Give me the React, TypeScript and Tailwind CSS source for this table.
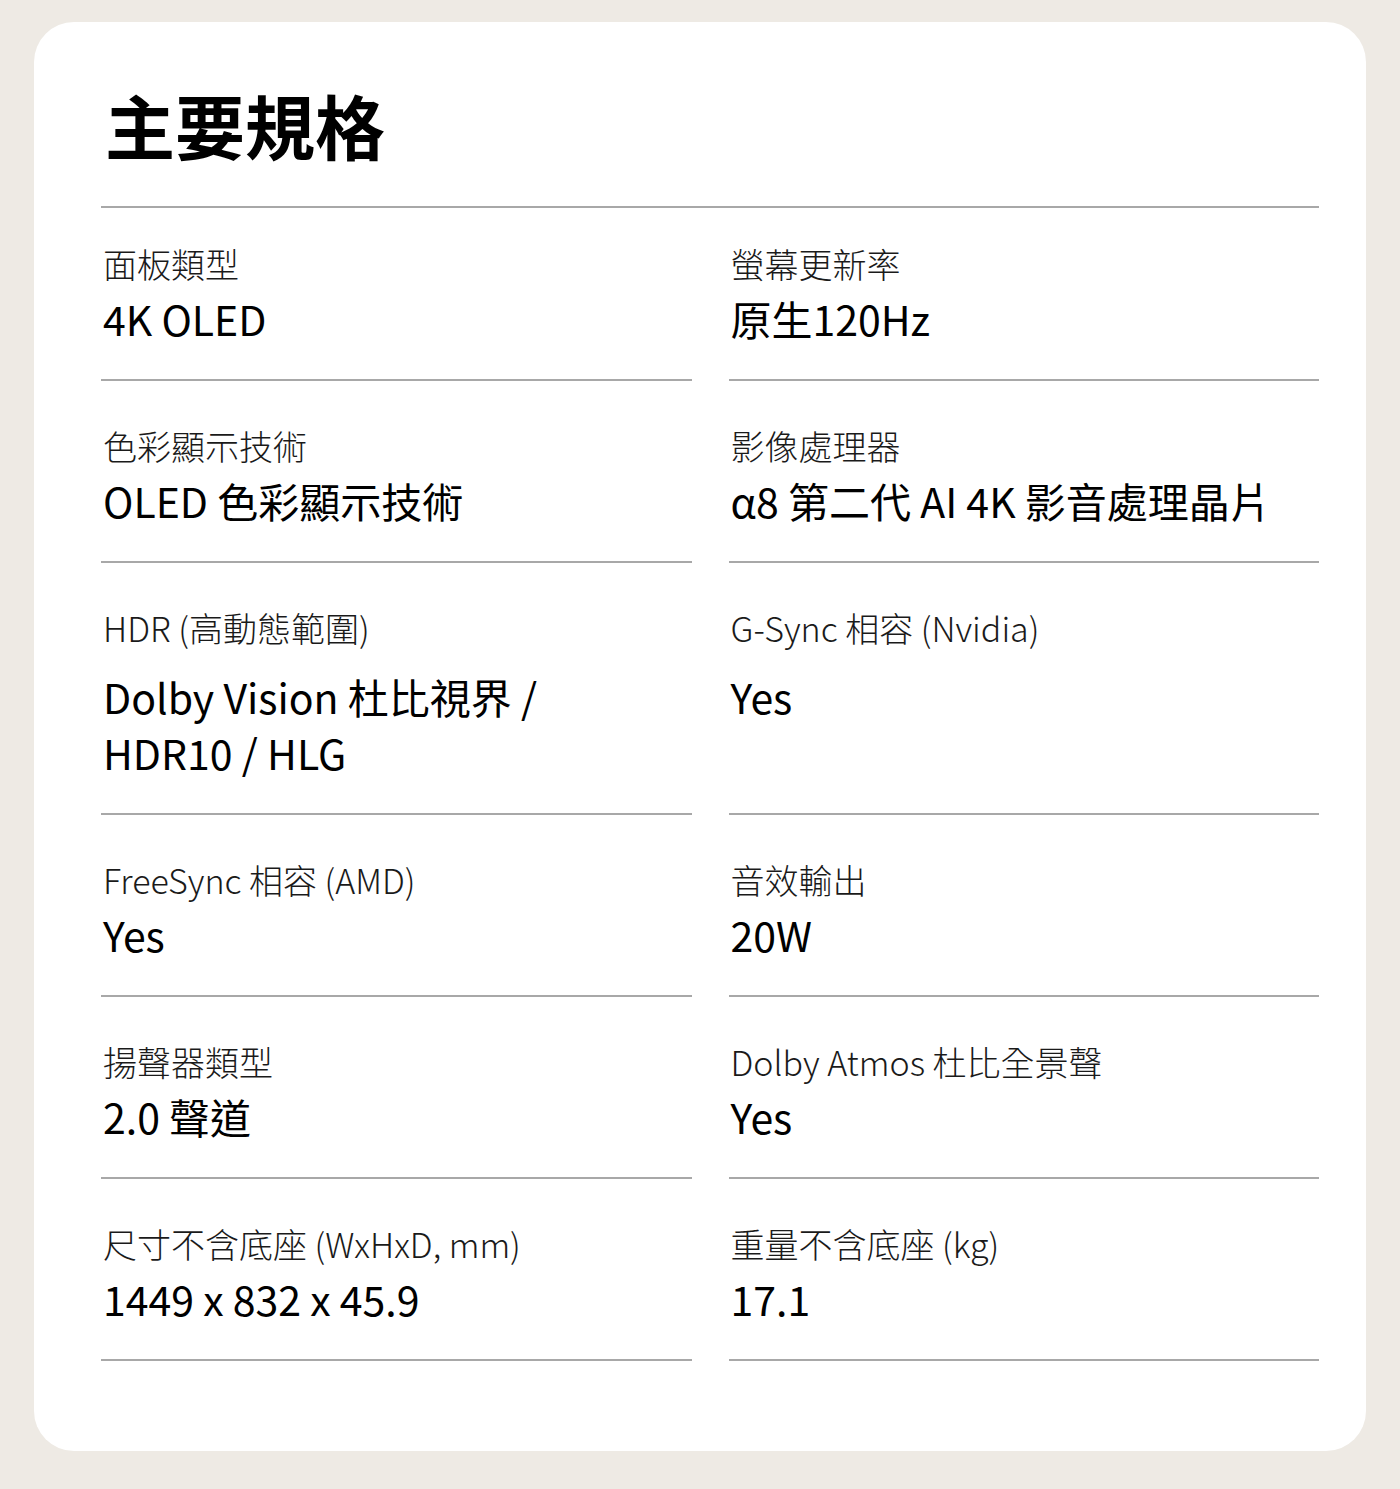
const specs: { label: string; value: string[] }[][] = [
  [
    { label: "面板類型", value: ["4K OLED"] },
    { label: "螢幕更新率", value: ["原生120Hz"] },
  ],
  [
    { label: "色彩顯示技術", value: ["OLED 色彩顯示技術"] },
    { label: "影像處理器", value: ["α8 第二代 AI 4K 影音處理晶片"] },
  ],
  [
    { label: "HDR (高動態範圍)", value: ["Dolby Vision 杜比視界 /", "HDR10 / HLG"] },
    { label: "G-Sync 相容 (Nvidia)", value: ["Yes"] },
  ],
  [
    { label: "FreeSync 相容 (AMD)", value: ["Yes"] },
    { label: "音效輸出", value: ["20W"] },
  ],
  [
    { label: "揚聲器類型", value: ["2.0 聲道"] },
    { label: "Dolby Atmos 杜比全景聲", value: ["Yes"] },
  ],
  [
    { label: "尺寸不含底座 (WxHxD, mm)", value: ["1449 x 832 x 45.9"] },
    { label: "重量不含底座 (kg)", value: ["17.1"] },
  ],
];

export default function App() {
  return (
    <div
      className="min-h-[1489px] bg-[#eeeae4] px-[34px] pt-[22px] pb-[37px] text-black"
      style={{ fontFamily: '"Noto Sans CJK TC", "Noto Sans", sans-serif' }}
    >
      <div className="rounded-[40px] bg-white pl-[67px] pr-[47px] pt-[68px] pb-[90px]">
        <h1 className="border-b-2 border-[#a8a8a8] pb-[46px] pl-[4px] text-[70px] font-bold leading-none">
          主要規格
        </h1>
        <div className="grid grid-cols-2 gap-x-[37px]">
          {specs.map((row, i) =>
            row.map((item) => (
              <div
                key={item.label}
                className={
                  "border-b-2 border-[#a8a8a8] pl-[2px] pb-[33px] " +
                  (i === 0 ? "pt-[33px]" : "pt-[42px]")
                }
              >
                <div className="text-[34px] font-light leading-[46px] text-[#1a1a1a]">
                  {item.label}
                </div>
                <div
                  className={
                    "text-[41px] leading-[56px] " + (i === 2 ? "mt-[17px]" : "mt-[3px]")
                  }
                >
                  {item.value.map((v) => (
                    <div key={v}>{v}</div>
                  ))}
                </div>
              </div>
            ))
          )}
        </div>
      </div>
    </div>
  );
}
